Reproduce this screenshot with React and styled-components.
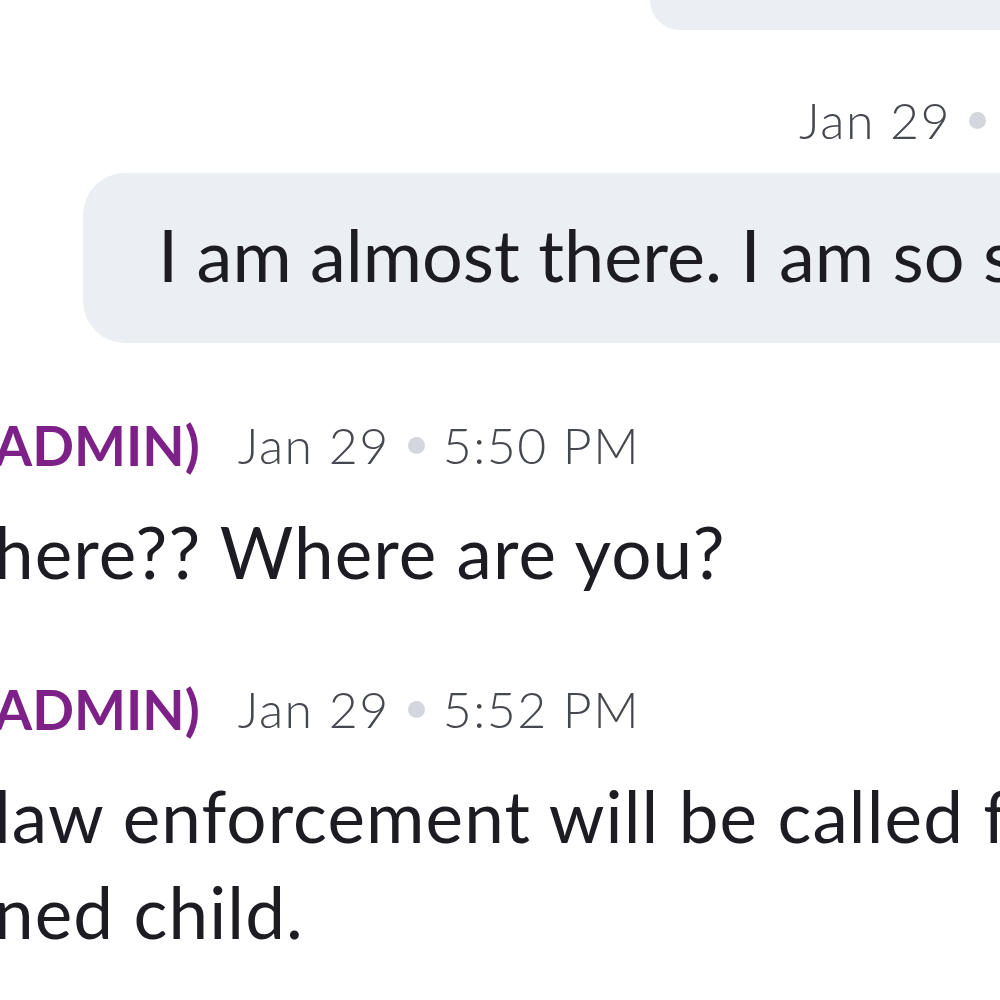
import React from "react";
import styled, { createGlobalStyle } from "styled-components";

const Global = createGlobalStyle`
  html, body {
    margin: 0;
    padding: 0;
    background: #ffffff;
    overflow: hidden;
  }
  body {
    font-family: Lato, "Noto Sans", "Liberation Sans", sans-serif;
    color: #1c1c22;
  }
`;

const Screen = styled.div`
  width: 1000px;
  height: 1000px;
  overflow: hidden;
  display: flex;
  flex-direction: column;
  background: #fff;
`;

const OutRow = styled.div`
  display: flex;
  justify-content: flex-end;
  margin-right: -60px;
`;

const TopBubble = styled.div`
  width: 410px;
  height: 30px;
  background: #ebeef3;
  border-radius: 0 0 0 44px;
`;

const OutMeta = styled.div`
  display: flex;
  align-items: center;
  justify-content: flex-end;
  gap: 18px;
  padding-right: 14px;
  margin-top: 62px;
  margin-bottom: 4px;
  height: 56px;
`;

const Stamp = styled.span`
  font-size: 50px;
  font-weight: 300;
  color: #46484f;
  white-space: nowrap;
  letter-spacing: 1.5px;
`;

const Dot = styled.span`
  width: 17px;
  height: 17px;
  border-radius: 50%;
  background: #d4d6dd;
  flex-shrink: 0;
`;

const OutBubble = styled.div`
  margin-top: 21px;
  margin-left: 83px;
  margin-right: -400px;
  height: 170px;
  box-sizing: border-box;
  padding: 0 0 8px 75px;
  display: flex;
  align-items: center;
  background: #ebeef3;
  border-radius: 42px;
  font-size: 72px;
  white-space: nowrap;
`;

const Incoming = styled.div`
  display: flex;
  flex-direction: column;
  margin-left: -6px;
  margin-top: ${(p) => p.$top}px;
`;

const Header = styled.div`
  display: flex;
  align-items: center;
  height: 64px;
  white-space: nowrap;
`;

const Name = styled.span`
  font-size: 55px;
  font-weight: 700;
  color: #7d2189;
  margin-right: 38px;
`;

const TimeGroup = styled.div`
  display: flex;
  align-items: center;
  gap: 18px;
`;

const Body = styled.div`
  margin-top: 27px;
  font-size: 71px;
  line-height: 96px;
  letter-spacing: 1.1px;
  white-space: nowrap;
  color: #1c1c22;
`;

const Message = ({ top, time, lines }) => (
  <Incoming $top={top}>
    <Header>
      <Name>ADMIN)</Name>
      <TimeGroup>
        <Stamp>Jan 29</Stamp>
        <Dot />
        <Stamp>{time}</Stamp>
      </TimeGroup>
    </Header>
    <Body>
      {lines.map((l) => (
        <div key={l}>{l}</div>
      ))}
    </Body>
  </Incoming>
);

export default function App() {
  return (
    <Screen>
      <Global />
      <OutRow>
        <TopBubble />
      </OutRow>
      <OutMeta>
        <Stamp>Jan 29</Stamp>
        <Dot />
      </OutMeta>
      <OutBubble>I am almost there. I am so sorry</OutBubble>
      <Message top={70} time="5:50 PM" lines={["here?? Where are you?"]} />
      <Message
        top={77}
        time="5:52 PM"
        lines={["law enforcement will be called for", "ned child."]}
      />
    </Screen>
  );
}
